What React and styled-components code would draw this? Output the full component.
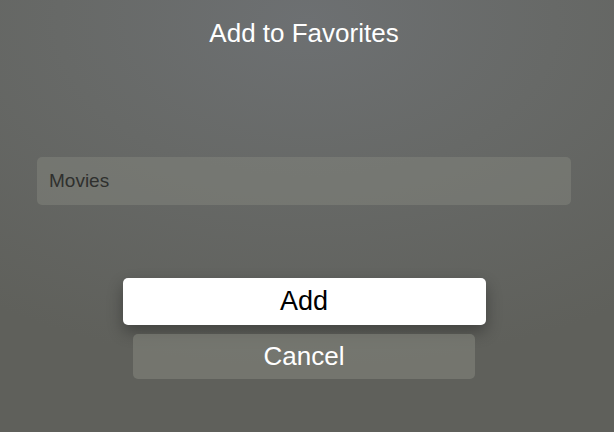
import styled, { createGlobalStyle } from 'styled-components'

const GlobalStyle = createGlobalStyle`
  html, body {
    margin:0;
    padding:0;
    height:100%;
  }
  body {
    font-family:"Liberation Sans", Arial, sans-serif;
    background:radial-gradient(ellipse 90% 80% at 50% 5%, #6d7072 0%, #676967 45%, #5f605b 100%);
    background-attachment:fixed;
  }
`

const Screen = styled.div`
  width:614px;
  height:432px;
  display:flex;
  flex-direction:column;
  align-items:center;
  padding:18px 6px 0 0;
  box-sizing:border-box;
`

const Title = styled.h1`
  margin:0;
  font-size:26px;
  line-height:30px;
  font-weight:400;
  color:#fff;
`

const Field = styled.div`
  margin-top:109px;
  width:534px;
  height:48px;
  box-sizing:border-box;
  padding:0 12px;
  display:flex;
  align-items:center;
  background:rgba(130,131,124,0.55);
  border-radius:5px;
  font-size:19px;
  color:#2f302e;
`

const Actions = styled.div`
  margin-top:73px;
  display:flex;
  flex-direction:column;
  align-items:center;
  gap:9px;
`

const Button = styled.button`
  border:none;
  margin:0;
  padding:0;
  font-family:inherit;
  display:flex;
  align-items:center;
  justify-content:center;
  width:${({ $focused }) => $focused ? '363px' : '342px'};
  height:${({ $focused }) => $focused ? '47px' : '45px'};
  border-radius:5px;
  font-size:${({ $focused }) => $focused ? '27px' : '26px'};
  color:${({ $focused }) => $focused ? '#000' : '#fff'};
  background:${({ $focused }) => $focused ? '#fff' : 'rgba(130,131,124,0.6)'};
  box-shadow:${({ $focused }) => $focused ? '0 7px 16px rgba(0,0,0,0.32)' : 'none'};
`

const App = () => (
  <>
    <GlobalStyle />
    <Screen>
      <Title>Add to Favorites</Title>
      <Field>Movies</Field>
      <Actions>
        <Button $focused>Add</Button>
        <Button>Cancel</Button>
      </Actions>
    </Screen>
  </>
)

export default App
